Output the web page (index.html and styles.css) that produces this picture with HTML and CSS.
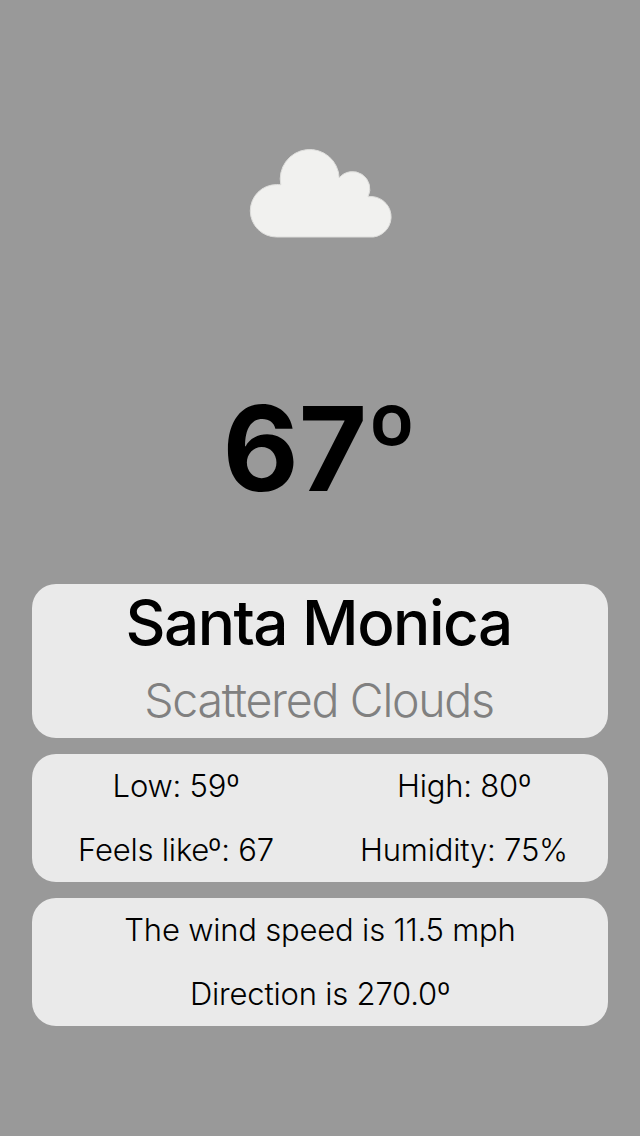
FILE: index.html
```html
<!DOCTYPE html>
<html lang="en">
<head>
<meta charset="utf-8">
<title>Weather</title>
<link rel="stylesheet" href="styles.css">
</head>
<body>
<main class="screen">
  <svg class="cloud" viewBox="0 0 144 90" aria-hidden="true">
    <path d="M27.500 89A26.200 26.200 0 0 1 27.500 36.600Q29.500 36.400 31.800 36.800A29.500 29.500 0 1 1 90.200 29.900A17.300 17.300 0 0 1 119 48.700A20.200 20.200 0 1 1 124.500 89Z"/>
  </svg>
  <h1 class="temp">67<span class="degree">º</span></h1>
  <section class="card place">
    <h2 class="city">Santa Monica</h2>
    <p class="sky">Scattered Clouds</p>
  </section>
  <section class="card grid">
    <p class="row">Low: 59º</p>
    <p class="row">High: 80º</p>
    <p class="row">Feels likeº: 67</p>
    <p class="row">Humidity: 75%</p>
  </section>
  <section class="card">
    <p class="row">The wind speed is 11.5 mph</p>
    <p class="row">Direction is 270.0º</p>
  </section>
</main>
</body>
</html>
```
FILE: styles.css
```css
* { box-sizing: border-box; margin: 0; }
body { background: #999; color: #000; font-family: Inter, "Liberation Sans", sans-serif; }
.screen { height: 1136px; padding: 148px 32px 0; display: flex; flex-direction: column; align-items: stretch; }
.cloud { width: 144px; height: 90px; margin-left: 217px; fill: #f1f1ef; stroke: #dededc; stroke-width: 1; overflow: visible; }
.temp { height: 144px; margin: 138px 0 64px; font-size: 117.5px; line-height: 144px; font-weight: 700; text-align: center; }
.degree { font-size: 107px; line-height: 1; vertical-align: 9px; margin-left: -1px; }
.card { background: #eaeaea; border-radius: 24px; margin-bottom: 16px; text-align: center; white-space: nowrap; }
.place { height: 154px; }
.city { padding-right: 3px; font-size: 62px; line-height: 78px; font-weight: 500; letter-spacing: -1.5px; }
.sky { padding-right: 2px; font-size: 46.5px; line-height: 76px; font-weight: 300; letter-spacing: -1.3px; color: #808080; }
.row { font-size: 31px; line-height: 64px; font-weight: 300; letter-spacing: -0.2px; }
.grid { display: grid; grid-template-columns: 1fr 1fr; }
```
